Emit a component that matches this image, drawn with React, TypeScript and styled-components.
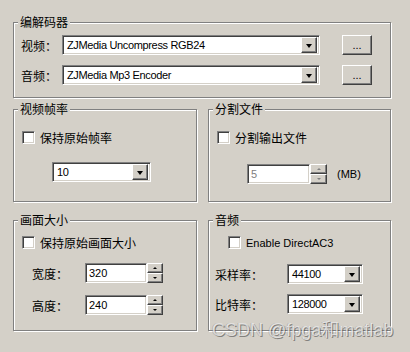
import React from "react";
import styled, { createGlobalStyle } from "styled-components";

const Global = createGlobalStyle`
  html, body { margin: 0; padding: 0; background: #d4d0c8; }
  body { font-family: "Noto Sans CJK SC", "Liberation Sans", sans-serif; font-size: 12px; color: #000; }
`;

const Page = styled.div`
  position: relative;
  width: 410px;
  height: 352px;
  box-sizing: border-box;
  padding: 15px 0 0 13px;
  display: flex;
  flex-direction: column;
  overflow: hidden;
`;

const Row = styled.div<{ $mt: number }>`
  display: flex;
  gap: 11px;
  margin-top: ${(p) => p.$mt}px;
`;

const Group = styled.fieldset<{ $w: number }>`
  margin: 0;
  padding: 0;
  min-width: 0;
  width: ${(p) => p.$w}px;
  box-sizing: border-box;
  border: 1px solid #808080;
  box-shadow: 1px 1px 0 #fff, inset 1px 1px 0 #fff;
`;

const Legend = styled.legend`
  margin-left: 4px;
  padding: 0 2px;
  font-size: 12px;
  line-height: 14px;
  height: 14px;
  background: #d4d0c8;
`;

const Body = styled.div<{ $pad: string; $gap?: number }>`
  padding: ${(p) => p.$pad};
  display: flex;
  flex-direction: column;
  gap: ${(p) => p.$gap ?? 0}px;
`;

const Line = styled.div<{ $mt?: number; $ml?: number }>`
  display: flex;
  align-items: center;
  height: 20px;
  margin-top: ${(p) => p.$mt ?? 0}px;
  margin-left: ${(p) => p.$ml ?? 0}px;
`;

const Label = styled.span<{ $w: number }>`
  width: ${(p) => p.$w}px;
  flex: none;
  white-space: nowrap;
`;

const sunken = `
  box-sizing: border-box;
  border: 1px solid;
  border-color: #808080 #fff #fff #808080;
  box-shadow: inset 1px 1px 0 #404040, inset -1px -1px 0 #d4d0c8;
  background: #fff;
`;

const raised = `
  box-sizing: border-box;
  border: 1px solid;
  border-color: #fff #404040 #404040 #fff;
  box-shadow: inset -1px -1px 0 #808080;
  background: #d4d0c8;
`;

const ComboBox = styled.div<{ $w: number }>`
  ${sunken}
  width: ${(p) => p.$w}px;
  height: 20px;
  flex: none;
  display: flex;
  align-items: center;
  padding: 2px;
  font-family: "Liberation Sans", sans-serif;
  font-size: 11px;
`;

const ComboText = styled.span`
  flex: 1;
  padding-left: 2px;
  white-space: nowrap;
  overflow: hidden;
  letter-spacing: -0.35px;
`;

const DropButton = styled.div`
  ${raised}
  width: 16px;
  height: 16px;
  flex: none;
  display: flex;
  align-items: center;
  justify-content: center;
  &::after {
    content: "";
    width: 0;
    height: 0;
    border-left: 3.5px solid transparent;
    border-right: 3.5px solid transparent;
    border-top: 4px solid #000;
    margin-top: 1px;
  }
`;

const DotsButton = styled.div`
  ${raised}
  width: 30px;
  height: 20px;
  margin-left: 22px;
  flex: none;
  display: flex;
  align-items: flex-end;
  justify-content: center;
  font-family: "Liberation Sans", sans-serif;
  font-size: 11px;
  line-height: 14px;
  padding-bottom: 2px;
`;

const CheckRow = styled.div<{ $ml?: number }>`
  display: flex;
  align-items: center;
  gap: 5px;
  height: 13px;
  margin-left: ${(p) => p.$ml ?? 0}px;
  white-space: nowrap;
`;

const CheckBox = styled.div`
  ${sunken}
  width: 13px;
  height: 13px;
  flex: none;
`;

const CheckText = styled.span<{ $latin?: boolean }>`
  font-family: ${(p) =>
    p.$latin ? `"Liberation Sans", sans-serif` : `"Noto Sans CJK SC", sans-serif`};
  font-size: ${(p) => (p.$latin ? 11 : 12)}px;
`;

const Edit = styled.div<{ $w: number; $disabled?: boolean }>`
  ${sunken}
  width: ${(p) => p.$w}px;
  height: 20px;
  flex: none;
  display: flex;
  align-items: center;
  padding-left: 3px;
  font-family: "Liberation Sans", sans-serif;
  font-size: 11px;
  color: ${(p) => (p.$disabled ? "#808080" : "#000")};
`;

const Spin = styled.div<{ $w: number }>`
  width: ${(p) => p.$w}px;
  height: 20px;
  flex: none;
  display: flex;
  flex-direction: column;
`;

const SpinBtn = styled.div<{ $up?: boolean; $disabled?: boolean }>`
  ${raised}
  height: 10px;
  display: flex;
  align-items: center;
  justify-content: center;
  &::after {
    content: "";
    width: 0;
    height: 0;
    border-left: 2px solid transparent;
    border-right: 2px solid transparent;
    ${(p) =>
      p.$up
        ? `border-bottom: 2px solid ${p.$disabled ? "#808080" : "#000"};`
        : `border-top: 2px solid ${p.$disabled ? "#808080" : "#000"};`}
  }
`;

const Unit = styled.span`
  margin-left: 10px;
  font-family: "Liberation Sans", sans-serif;
  font-size: 11px;
`;

const Watermark = styled.div`
  position: absolute;
  left: 212px;
  top: 320px;
  font-family: "Liberation Sans", "Noto Sans CJK SC", sans-serif;
  font-size: 18px;
  line-height: 20px;
  color: rgba(240, 240, 240, 0.75);
  text-shadow: 1px 1px 0 rgba(60, 60, 60, 0.55), -1px 0 0 rgba(120, 120, 120, 0.3);
  white-space: nowrap;
  pointer-events: none;
`;

const Combo = ({ w, text }: { w: number; text: string }) => (
  <ComboBox $w={w}>
    <ComboText>{text}</ComboText>
    <DropButton />
  </ComboBox>
);

const SpinBox = ({ w, disabled }: { w: number; disabled?: boolean }) => (
  <Spin $w={w}>
    <SpinBtn $up $disabled={disabled} />
    <SpinBtn $disabled={disabled} />
  </Spin>
);

export default function App() {
  return (
    <Page>
      <Global />
      <Group $w={378}>
        <Legend>编解码器</Legend>
        <Body $pad="6px 0 12px 7px" $gap={10}>
          <Line>
            <Label $w={41}>视频：</Label>
            <Combo w={258} text="ZJMedia Uncompress RGB24" />
            <DotsButton>...</DotsButton>
          </Line>
          <Line>
            <Label $w={41}>音频：</Label>
            <Combo w={258} text="ZJMedia Mp3 Encoder" />
            <DotsButton>...</DotsButton>
          </Line>
        </Body>
      </Group>

      <Row $mt={4}>
        <Group $w={184}>
          <Legend>视频帧率</Legend>
          <Body $pad="15px 0 19px 8px">
            <CheckRow>
              <CheckBox />
              <CheckText>保持原始帧率</CheckText>
            </CheckRow>
            <Line $mt={18} $ml={30}>
              <Combo w={99} text="10" />
            </Line>
          </Body>
        </Group>
        <Group $w={183}>
          <Legend>分割文件</Legend>
          <Body $pad="15px 0 17px 8px">
            <CheckRow>
              <CheckBox />
              <CheckText>分割输出文件</CheckText>
            </CheckRow>
            <Line $mt={20} $ml={30}>
              <Edit $w={63} $disabled>5</Edit>
              <SpinBox w={17} disabled />
              <Unit>(MB)</Unit>
            </Line>
          </Body>
        </Group>
      </Row>

      <Row $mt={11}>
        <Group $w={184}>
          <Legend>画面大小</Legend>
          <Body $pad="9px 0 15px 8px">
            <CheckRow>
              <CheckBox />
              <CheckText>保持原始画面大小</CheckText>
            </CheckRow>
            <Line $mt={14} $ml={10}>
              <Label $w={53}>宽度：</Label>
              <Edit $w={62}>320</Edit>
              <SpinBox w={16} />
            </Line>
            <Line $mt={12} $ml={10}>
              <Label $w={53}>高度：</Label>
              <Edit $w={62}>240</Edit>
              <SpinBox w={16} />
            </Line>
          </Body>
        </Group>
        <Group $w={183}>
          <Legend>音频</Legend>
          <Body $pad="9px 0 16px 6px">
            <CheckRow $ml={13}>
              <CheckBox />
              <CheckText $latin>Enable DirectAC3</CheckText>
            </CheckRow>
            <Line $mt={15}>
              <Label $w={72}>采样率：</Label>
              <Combo w={76} text="44100" />
            </Line>
            <Line $mt={10}>
              <Label $w={72}>比特率：</Label>
              <Combo w={76} text="128000" />
            </Line>
          </Body>
        </Group>
      </Row>

      <Watermark>CSDN @fpga和matlab</Watermark>
    </Page>
  );
}
